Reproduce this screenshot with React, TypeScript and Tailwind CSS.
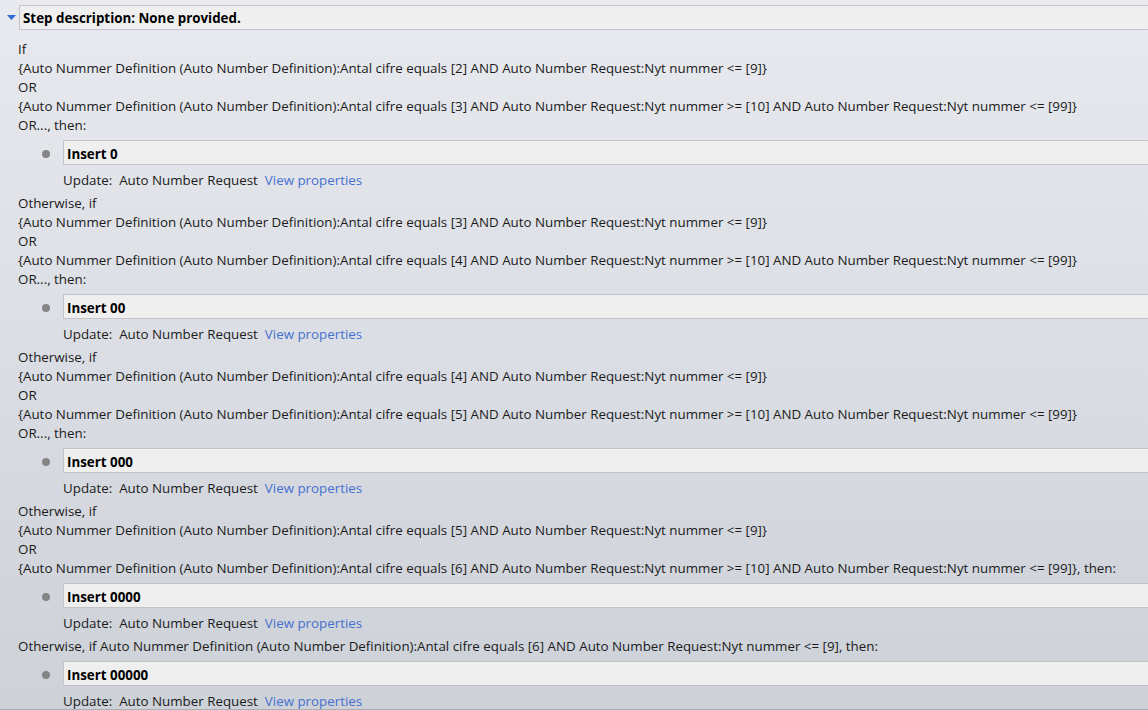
const COND = "{Auto Nummer Definition (Auto Number Definition):Antal cifre equals";
const REQ = "AND Auto Number Request:Nyt nummer";

type Section = { lines: string[]; insert: string };

const SECTIONS: Section[] = [
    {
        lines: [
            "If",
            `${COND} [2] ${REQ} <= [9]}`,
            "OR",
            `${COND} [3] ${REQ} >= [10] ${REQ} <= [99]}`,
            "OR..., then:",
        ],
        insert: "Insert 0",
    },
    {
        lines: [
            "Otherwise, if",
            `${COND} [3] ${REQ} <= [9]}`,
            "OR",
            `${COND} [4] ${REQ} >= [10] ${REQ} <= [99]}`,
            "OR..., then:",
        ],
        insert: "Insert 00",
    },
    {
        lines: [
            "Otherwise, if",
            `${COND} [4] ${REQ} <= [9]}`,
            "OR",
            `${COND} [5] ${REQ} >= [10] ${REQ} <= [99]}`,
            "OR..., then:",
        ],
        insert: "Insert 000",
    },
    {
        lines: [
            "Otherwise, if",
            `${COND} [5] ${REQ} <= [9]}`,
            "OR",
            `${COND} [6] ${REQ} >= [10] ${REQ} <= [99]}, then:`,
        ],
        insert: "Insert 0000",
    },
    {
        lines: [
            "Otherwise, if Auto Nummer Definition (Auto Number Definition):Antal cifre equals [6] AND Auto Number Request:Nyt nummer <= [9], then:",
        ],
        insert: "Insert 00000",
    },
];

export default function App() {
    return (
        <div
            className="w-[1148px] h-[710px] overflow-hidden bg-gradient-to-b from-[#e8eaef] to-[#cdd1d8] border-b border-[#a9adb5] text-[#1b1b1b] text-[13.35px] leading-[19px]"
            style={{ fontFamily: '"Open Sans", "Liberation Sans", sans-serif' }}
        >
            {/* Header */}
            <div className="pt-[5px] flex items-stretch">
                <div className="w-[19px] flex items-center justify-center">
                    <svg width="9" height="5" viewBox="0 0 9 5" className="ml-[3px]">
                        <path d="M0 0 H9 L4.5 5 Z" fill="#2f6bd3" />
                    </svg>
                </div>
                <div className="flex-1 h-[25px] bg-[#efefef] border border-r-0 border-[#c3c4ca] flex items-center pl-[3px] pt-[2px] font-bold text-black">
                    Step description: None provided.
                </div>
            </div>

            {/* Body */}
            <div className="pl-[18px] pt-[10px]">
                {SECTIONS.map((s, i) => (
                    <div key={i} className={i === 0 ? "" : "mt-[4px]"}>
                        {s.lines.map((l, j) => (
                            <div key={j} className="whitespace-pre">{l}</div>
                        ))}
                        <div className="flex items-center mt-[5px]">
                            <div className="w-[45px] flex justify-end pr-[13px] pt-[2px]">
                                <div className="w-[8px] h-[8px] rounded-full bg-[#858585]" />
                            </div>
                            <div className="flex-1 h-[25px] bg-[#efefef] border border-r-0 border-[#c3c4ca] flex items-center pl-[3px] pt-[3px] font-bold text-black">
                                {s.insert}
                            </div>
                        </div>
                        <div className="pl-[45px] mt-[6px] whitespace-pre">
                            {"Update:  Auto Number Request  "}
                            <span className="text-[#4670d0]">View properties</span>
                        </div>
                    </div>
                ))}
            </div>
        </div>
    );
}
